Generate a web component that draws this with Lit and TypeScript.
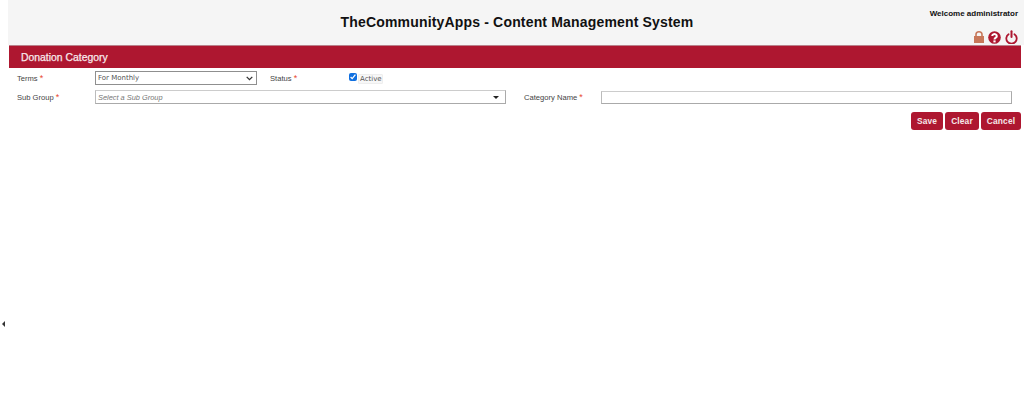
import { LitElement, html, css } from "lit";
import { customElement } from "lit/decorators.js";

const chevron = `url("data:image/svg+xml,%3Csvg xmlns='http://www.w3.org/2000/svg' width='7' height='5'%3E%3Cpath d='M.7.9 3.5 3.7 6.3.9' fill='none' stroke='%23333' stroke-width='1.3'/%3E%3C/svg%3E")`;

@customElement("app-root")
export class AppRoot extends LitElement {
  static styles = css`
    :host { display: block; height: 419px; position: relative; background: #fff; overflow: hidden;
      font-family: "Liberation Sans", Arial, sans-serif; color: #333; }
    .collapse { position: absolute; left: 2px; top: 321px; width: 0; height: 0;
      border-top: 3px solid transparent; border-bottom: 3px solid transparent; border-right: 3px solid #333; }
    .main { margin-left: 8px; }
    header { height: 45px; background: #f5f5f5; position: relative; }
    h1 { margin: 0; font-size: 14px; font-weight: 700; color: #111; text-align: center; line-height: 18px;
      padding: 13px 0 0 2px; letter-spacing: 0.17px; }
    .user { position: absolute; right: 6px; top: 0; display: flex; flex-direction: column; align-items: flex-end; }
    .welcome { font-size: 8px; font-weight: 700; color: #111; line-height: 10px; padding-top: 9px; }
    .icons { display: flex; gap: 4px; margin-top: 11px; align-items: center; }
    .icons svg { display: block; }
    .bar { margin: 0 3px 0 1px; height: 23px; background: #ae1730; color: #f8eaec; font-size: 10.4px; font-weight: 400;
      -webkit-text-stroke: 0.25px #f8eaec; line-height: 24px; padding-left: 12px; box-sizing: border-box; border-top: 1px solid #b9808a; }
    .form { padding: 0 3px 0 9px; font-size: 7.6px; color: #444; }
    .row { display: grid; align-items: center; }
    .r1 { grid-template-columns: 78px 162px 13px 79px auto; height: 20px; margin-top: 0; }
    .r2 { grid-template-columns: 78px 411px 18px 77px 411px; height: 18px; margin-top: 0; }
    .star { color: #e8482f; font-size: 9px; }
    select, .fake, .input { box-sizing: border-box; background-color: #fff; font: inherit; color: #444; }
    select { appearance: none; -webkit-appearance: none; width: 162px; height: 14px; padding: 0 0 0 2px; border: 1px solid #8f8f8f; border-radius: 0;
      font-family: "DejaVu Sans", sans-serif; font-size: 7px; line-height: 12px; color: #555; background-image: ${css([chevron] as unknown as TemplateStringsArray)};
      background-repeat: no-repeat; background-position: right 3px center; }
    .fake { width: 411px; height: 14px; border: 1px solid #aaa; border-top-color: #ccc; border-left-color: #bbb;
      display: flex; align-items: center; justify-content: space-between; padding: 0 6px 0 2px;
      font-style: italic; color: #777; font-size: 7.4px; }
    .caret { width: 0; height: 0; border-left: 3px solid transparent; border-right: 3px solid transparent; border-top: 3.5px solid #222; }
    .input { width: 411px; height: 13px; border: 1px solid #aaa; border-top-color: #ccc; border-left-color: #bbb; display: block; padding: 0; }
    .active { display: flex; align-items: center; gap: 1px; }
    .active input { margin: 0; width: 8px; height: 8px; accent-color: #0f6fe0; position: relative; top: -1px; }
    .active span { font-family: "DejaVu Sans", sans-serif; font-size: 7px; color: #555; background: #f7f7f7;
      border: 1px solid #eee; border-radius: 1px; padding: 0 0 0 1px; line-height: 8px; margin-top: 2px; }
    .actions { display: flex; justify-content: flex-end; gap: 2px; margin-top: 6px; }
    button { height: 18px; padding: 0; border: 0; border-radius: 3px; background: #ae1730; color: #f6e8ea;
      font-family: "Liberation Sans", Arial, sans-serif; font-weight: 700; font-size: 8.4px; letter-spacing: 0.15px; }
    .save { width: 32px; } .clear { width: 34px; } .cancel { width: 40px; }
  `;

  render() {
    return html`
      <div class="collapse"></div>
      <div class="main">
        <header>
          <h1>TheCommunityApps - Content Management System</h1>
          <div class="user">
            <div class="welcome">Welcome administrator</div>
            <div class="icons">
              <svg width="10" height="12" viewBox="0 0 10 12"><path fill="#c8785a" d="M0 5h1.2V3.5a3.8 3.5 0 0 1 7.6 0V5H10v7H0zM2.8 5h4.4V3.6a2.2 2.1 0 0 0-4.4 0z"/></svg>
              <svg width="13" height="13" viewBox="0 0 13 13"><circle cx="6.5" cy="6.5" r="6.3" fill="#ae1730"/><path fill="none" stroke="#fff" stroke-width="2" d="M4.2 5a2.3 2 0 1 1 3.6 1.7c-.9.6-1.3.9-1.3 1.8"/><rect x="5.4" y="9.4" width="2.2" height="2" fill="#fff"/></svg>
              <svg width="13" height="14" viewBox="0 0 13 14"><path fill="none" stroke="#ae1730" stroke-width="1.8" stroke-linecap="round" d="M3.6 4.2a5.2 5.2 0 1 0 5.8 0"/><path stroke="#ae1730" stroke-width="2" stroke-linecap="round" d="M6.5 1.2v5.8"/></svg>
            </div>
          </div>
        </header>
        <div class="bar">Donation Category</div>
        <div class="form">
          <div class="row r1">
            <label>Terms <span class="star">*</span></label>
            <select><option>For Monthly</option></select>
            <span></span>
            <label>Status <span class="star">*</span></label>
            <label class="active"><input type="checkbox" checked /><span>Active</span></label>
          </div>
          <div class="row r2">
            <label>Sub Group <span class="star">*</span></label>
            <div class="fake">Select a Sub Group<i class="caret"></i></div>
            <span></span>
            <label>Category Name <span class="star">*</span></label>
            <input class="input" type="text" />
          </div>
          <div class="actions">
            <button class="save">Save</button>
            <button class="clear">Clear</button>
            <button class="cancel">Cancel</button>
          </div>
        </div>
      </div>
    `;
  }
}
